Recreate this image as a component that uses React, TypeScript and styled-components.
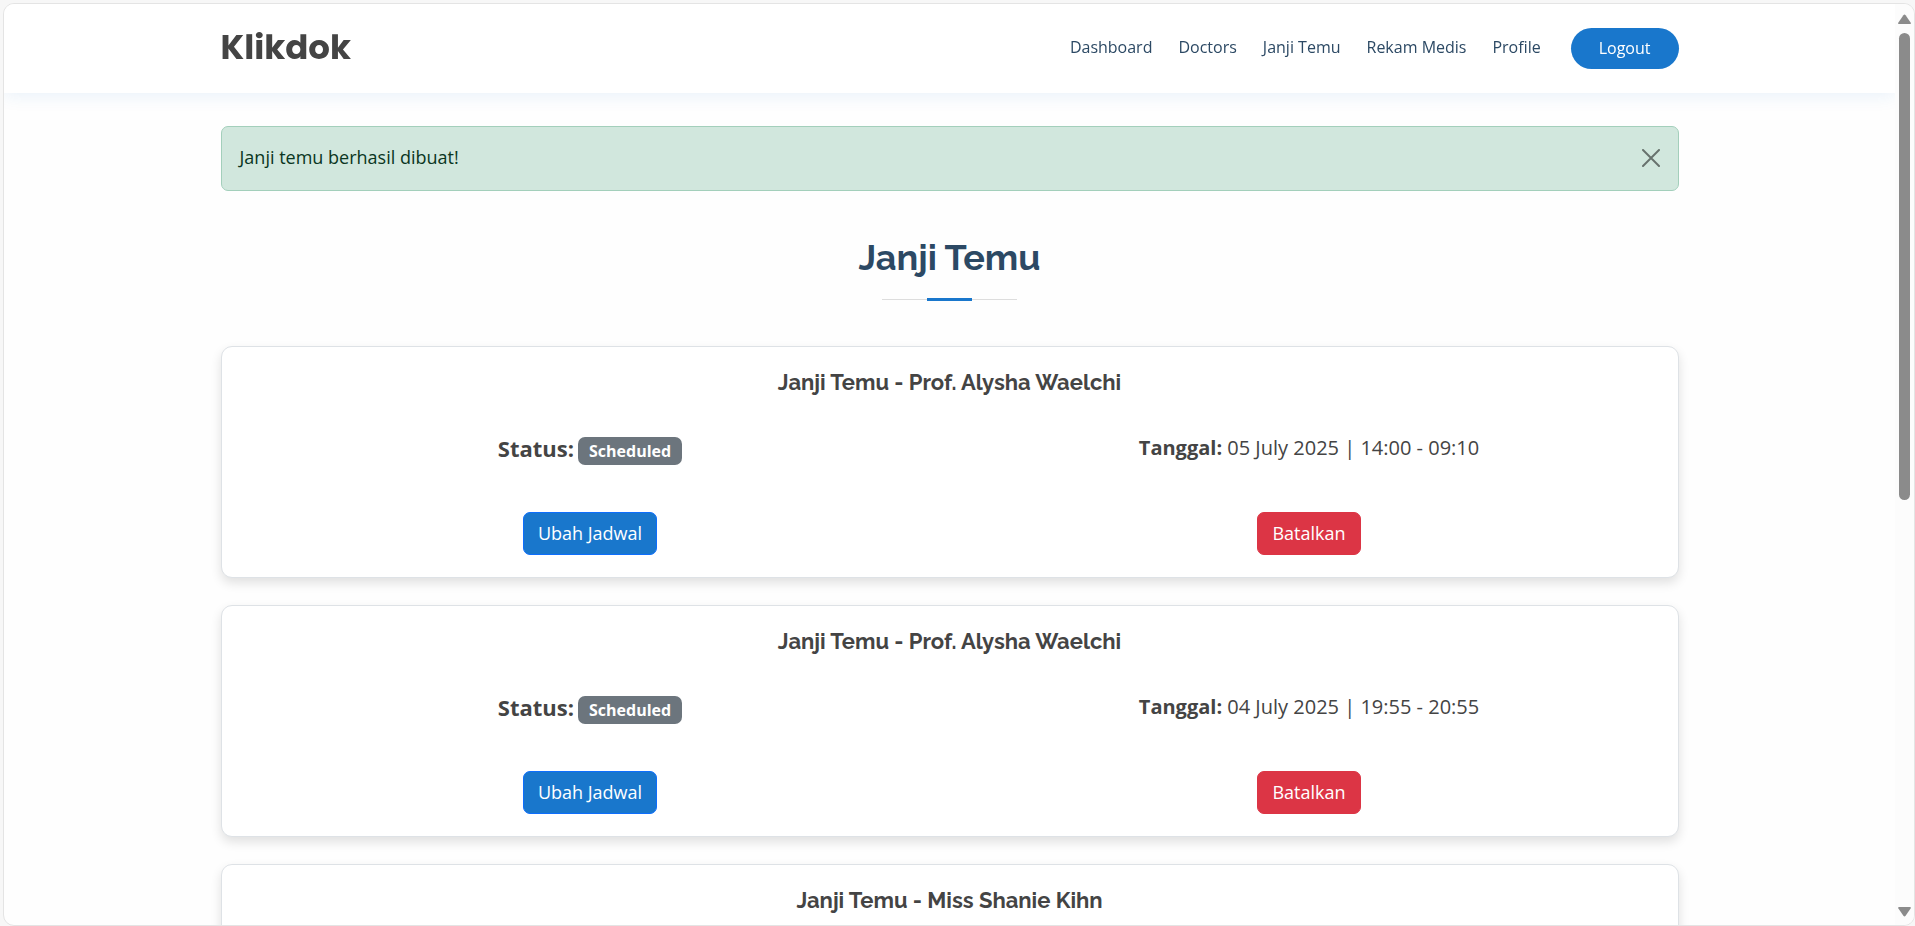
import React, { useState } from "react";
import styled, { createGlobalStyle } from "styled-components";

const bodyFont = `"Open Sans", "Noto Sans", sans-serif`;
const headingFont = `Raleway, Lato, "Open Sans", sans-serif`;
const logoFont = `Poppins, Inter, "Open Sans", sans-serif`;

const GlobalStyle = createGlobalStyle`
  *, *::before, *::after { box-sizing: border-box; }
  body {
    margin: 0;
    background: #f7f7f7;
    color: #444444;
    font: 400 18px/27px ${bodyFont};
  }
`;

const Frame = styled.div`
  display: flex;
  height: calc(100vh - 3px);
  margin: 3px 0 0 3px;
  border: 1px solid #e4e4e4;
  border-radius: 11px;
  background: #fefefe;
  overflow: hidden;
`;

const Pane = styled.div`
  flex: 1;
  min-width: 0;
  overflow-x: hidden;
  overflow-y: auto;
  scrollbar-width: none;
`;

const Container = styled.div`
  width: 100%;
  max-width: 1458px;
  margin: 0 auto;
`;

const Header = styled.header`
  position: sticky;
  top: 0;
  z-index: 2;
  padding: 19px 0;
  background: #ffffff;
  box-shadow: 0 2px 17px rgba(25, 119, 204, 0.1);
`;

const HeaderRow = styled(Container)`
  display: flex;
  align-items: center;
  justify-content: space-between;
  height: 51px;
`;

const Logo = styled.a`
  padding-bottom: 4px;
  color: #444444;
  font: 700 34px/44px ${logoFont};
  text-decoration: none;
`;

const Nav = styled.nav`
  display: flex;
  align-items: center;
  gap: 26px;
`;

const NavLink = styled.a`
  padding-bottom: 4px;
  color: #2c4964;
  font-size: 16px;
  line-height: 24px;
  text-decoration: none;
`;

const LogoutButton = styled.button`
  margin-left: 4px;
  padding: 8px 28px 9px;
  border: 0;
  border-radius: 56px;
  background: #1977cc;
  color: #ffffff;
  font: 400 16px/24px ${bodyFont};
  cursor: pointer;
`;

const Main = styled.main`
  padding: 33px 0;
`;

const Alert = styled.div`
  display: flex;
  align-items: center;
  justify-content: space-between;
  padding: 17px 18px 19px;
  border: 1px solid #a3cfbb;
  border-radius: 7px;
  background: #d1e7dd;
  color: #0a3622;
`;

const CloseButton = styled.button`
  display: flex;
  padding: 0;
  border: 0;
  background: transparent;
  color: #000000;
  opacity: 0.5;
  cursor: pointer;
`;

const SectionTitle = styled.h2`
  display: flex;
  flex-direction: column;
  align-items: center;
  gap: 19px;
  margin: 45px 0;
  color: #2c4964;
  font: 700 36px/43px ${headingFont};
`;

const TitleRule = styled.span`
  display: grid;
  place-items: center;
  width: 135px;
  height: 3px;
  background: linear-gradient(#dddddd, #dddddd) center / 100% 1px no-repeat;

  &::after {
    content: "";
    width: 45px;
    height: 3px;
    background: #1977cc;
  }
`;

const CardList = styled.div`
  display: grid;
  gap: 27px;
`;

const Card = styled.article`
  min-height: 232px;
  padding: 22px 9px;
  border: 1px solid #dee2e6;
  border-radius: 11px;
  background: #ffffff;
  box-shadow: 0 5px 11px rgba(0, 0, 0, 0.12);
  text-align: center;
`;

const CardTitle = styled.h5`
  margin: 0 0 36px;
  color: #444444;
  font: 700 22px/27px ${headingFont};
`;

const Columns = styled.div`
  display: grid;
  grid-template-columns: 1fr 1fr;
  justify-items: center;
  row-gap: 47px;
`;

const Status = styled.div`
  display: flex;
  align-items: center;
  gap: 4px;
  font-size: 22px;
  font-weight: 700;
  height: 33px;
`;

const Badge = styled.span`
  margin-top: 4px;
  padding: 4px 11px;
  border-radius: 7px;
  background: #6c757d;
  color: #ffffff;
  font-size: 16px;
  line-height: 20px;
`;

const DateText = styled.div`
  font-size: 20px;
  line-height: 32px;
`;

const ActionButton = styled.button<{ $danger?: boolean }>`
  padding: 7px 14px;
  border: 1px solid ${(p) => (p.$danger ? "#dc3545" : "#0d6efd")};
  border-radius: 7px;
  background: ${(p) => (p.$danger ? "#dc3545" : "#1977cc")};
  color: #ffffff;
  font: 400 18px/27px ${bodyFont};
  cursor: pointer;
`;

const ScrollRail = styled.div`
  display: flex;
  flex-direction: column;
  align-items: center;
  width: 19px;
  padding: 10px 0 8px;
  background: #fcfcfc;
`;

const ScrollTrack = styled.div`
  flex: 1;
  margin: 9px 0;
`;

const ScrollThumb = styled.div`
  width: 11px;
  height: 54%;
  border-radius: 6px;
  background: #8b8b8b;
`;

const Arrow = ({ down = false }: { down?: boolean }) => (
  <svg width="13" height="10" viewBox="0 0 13 10" aria-hidden="true">
    <path
      d={
        down
          ? "M1.2 0h10.6q1.6 0 .8 1.4L7.6 8.8q-1.1 1.6-2.2 0L.4 1.4Q-.4 0 1.2 0Z"
          : "M1.2 10h10.6q1.6 0 .8-1.4L7.6 1.2q-1.1-1.6-2.2 0L.4 8.6Q-.4 10 1.2 10Z"
      }
      fill="#8b8b8b"
    />
  </svg>
);

const links = ["Dashboard", "Doctors", "Janji Temu", "Rekam Medis", "Profile"];

type Appointment = { doctor: string; status?: string; date?: string };

const appointments: Appointment[] = [
  { doctor: "Prof. Alysha Waelchi", status: "Scheduled", date: "05 July 2025 | 14:00 - 09:10" },
  { doctor: "Prof. Alysha Waelchi", status: "Scheduled", date: "04 July 2025 | 19:55 - 20:55" },
  { doctor: "Miss Shanie Kihn" },
];

export default function App() {
  const [alertOpen, setAlertOpen] = useState(true);

  return (
    <>
      <GlobalStyle />
      <Frame>
        <Pane>
          <Header>
            <HeaderRow>
              <Logo href="#">Klikdok</Logo>
              <Nav>
                {links.map((label) => (
                  <NavLink key={label} href="#">
                    {label}
                  </NavLink>
                ))}
                <LogoutButton type="button">Logout</LogoutButton>
              </Nav>
            </HeaderRow>
          </Header>
          <Main>
            <Container>
              {alertOpen && (
                <Alert role="alert">
                  Janji temu berhasil dibuat!
                  <CloseButton type="button" aria-label="Close" onClick={() => setAlertOpen(false)}>
                    <svg width="18" height="18" viewBox="0 0 18 18" aria-hidden="true">
                      <path
                        d="M1 1l16 16M17 1L1 17"
                        stroke="currentColor"
                        strokeWidth="2"
                        strokeLinecap="round"
                      />
                    </svg>
                  </CloseButton>
                </Alert>
              )}
              <SectionTitle>
                Janji Temu
                <TitleRule />
              </SectionTitle>
              <CardList>
                {appointments.map((item, index) => (
                  <Card key={index}>
                    <CardTitle>Janji Temu - {item.doctor}</CardTitle>
                    {item.date && (
                      <Columns>
                        <Status>
                          Status: <Badge>{item.status}</Badge>
                        </Status>
                        <DateText>
                          <strong>Tanggal:</strong> {item.date}
                        </DateText>
                        <ActionButton type="button">Ubah Jadwal</ActionButton>
                        <ActionButton type="button" $danger>
                          Batalkan
                        </ActionButton>
                      </Columns>
                    )}
                  </Card>
                ))}
              </CardList>
            </Container>
          </Main>
        </Pane>
        <ScrollRail aria-hidden="true">
          <Arrow />
          <ScrollTrack>
            <ScrollThumb />
          </ScrollTrack>
          <Arrow down />
        </ScrollRail>
      </Frame>
    </>
  );
}
